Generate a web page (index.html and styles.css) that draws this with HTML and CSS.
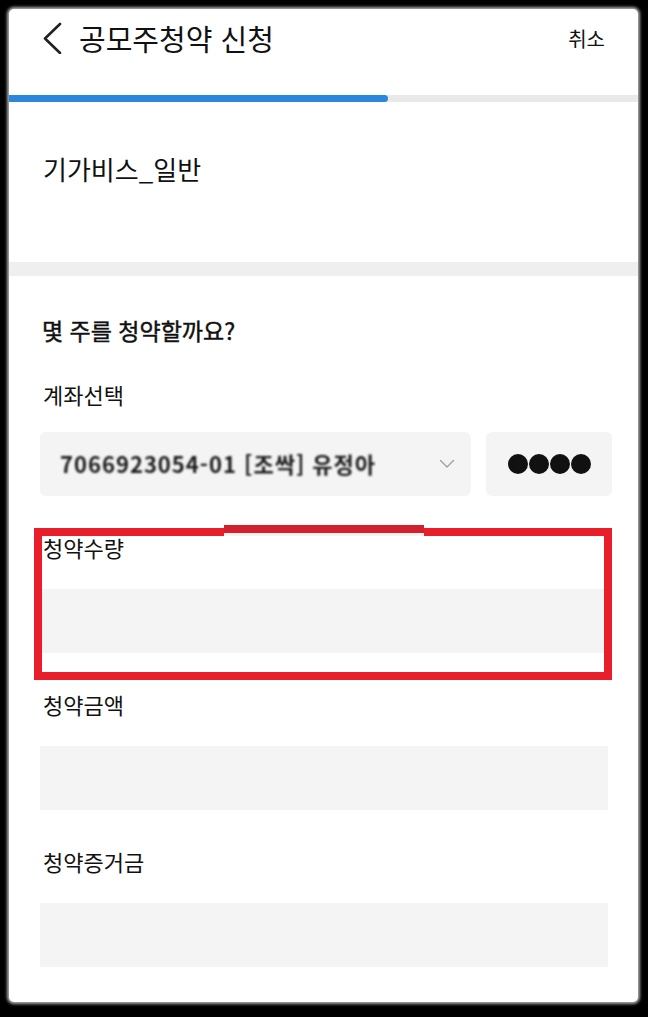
FILE: index.html
```html
<!DOCTYPE html>
<html lang="ko">
<head>
<meta charset="utf-8">
<title>공모주청약 신청</title>
<link rel="stylesheet" href="styles.css">
</head>
<body>
<div class="card">
  <header class="topbar">
    <svg class="back" width="20" height="32" viewBox="0 0 20 32" aria-hidden="true">
      <polyline points="18,2 3,16.5 18,31" fill="none" stroke="#222" stroke-width="2.6" stroke-linecap="round" stroke-linejoin="round"/>
    </svg>
    <h1 class="title">공모주청약 신청</h1>
    <span class="cancel">취소</span>
  </header>
  <div class="progress"><div class="progress-fill" style="width:379px"></div></div>

  <section class="product">
    <p class="product-name">기가비스_일반</p>
  </section>
  <div class="band"></div>

  <section class="form">
    <h2 class="question">몇 주를 청약할까요?</h2>
    <p class="label label-account">계좌선택</p>
    <div class="account-row">
      <div class="select">
        <span class="account">7066923054-01 [조싹] 유정아</span>
        <svg class="caret" width="16" height="10" viewBox="0 0 16 10" aria-hidden="true">
          <polyline points="1.5,1.5 8,8 14.5,1.5" fill="none" stroke="#a0a0a0" stroke-width="1.4" stroke-linecap="round" stroke-linejoin="round"/>
        </svg>
      </div>
      <div class="pw">
        <span class="dot"></span><span class="dot"></span><span class="dot"></span><span class="dot"></span>
      </div>
    </div>

    <div class="field field-highlight">
      <p class="label">청약수량</p>
      <div class="input"></div>
      <div class="mark"><div class="mark-notch"></div></div>
    </div>
    <div class="field">
      <p class="label">청약금액</p>
      <div class="input"></div>
    </div>
    <div class="field">
      <p class="label">청약증거금</p>
      <div class="input"></div>
    </div>
  </section>
</div>
</body>
</html>
```

FILE: styles.css
```css
* { box-sizing: border-box; }
html, body {
  margin: 0;
  padding: 0;
  background: #000;
}
body {
  width: 648px;
  height: 1017px;
  overflow: hidden;
  font-family: "Noto Sans CJK KR", "Noto Sans", sans-serif;
  color: #111;
}
.card {
  margin: 9px 0 0 9px;
  width: 629px;
  height: 993px;
  background: #fff;
  border-radius: 5px;
  box-shadow: 0 0 3px 2px rgba(200, 200, 200, 0.85);
  overflow: hidden;
}
.topbar {
  height: 57px;
  display: flex;
  align-items: center;
  padding: 0 33px 0 33px;
}
.back {
  display: block;
  flex: none;
  margin-top: 1px;
}
.title {
  margin: 0 0 0 17px;
  font-size: 29px;
  font-weight: 400;
  line-height: 40px;
  flex: 1;
}
.cancel {
  font-size: 20px;
  line-height: 30px;
  margin-top: 2px;
}
.progress {
  margin-top: 29px;
  height: 7px;
  background: #e9e9e9;
}
.progress-fill {
  height: 7px;
  background: #2b87dc;
  border-radius: 0 4px 4px 0;
}
.product {
  height: 160px;
  padding: 50px 31px 0 34px;
}
.product-name {
  margin: 0;
  font-size: 26px;
  line-height: 34px;
}
.band {
  height: 14px;
  background: #efefef;
}
.form {
  padding: 38px 30px 0 31px;
}
.question {
  margin: 0 0 0 2px;
  font-size: 23px;
  font-weight: 400;
  -webkit-text-stroke: 0.45px #111;
  line-height: 32px;
}
.label {
  margin: 0 0 0 3px;
  font-size: 22px;
  line-height: 30px;
}
.label-account {
  margin-top: 33px;
}
.account-row {
  margin: 23px -4px 0 0;
  display: flex;
  gap: 15px;
  height: 64px;
}
.select {
  flex: 1;
  background: #f4f4f4;
  border-radius: 6px;
  display: flex;
  align-items: center;
  padding: 0 16px 0 20px;
}
.account {
  flex: 1;
  font-size: 22px;
  font-weight: 700;
  color: #1a1a1a;
  filter: blur(0.8px);
  letter-spacing: 1px;
  white-space: nowrap;
  margin-top: -2px;
}
.caret {
  display: block;
}
.pw {
  width: 126px;
  background: #f4f4f4;
  border-radius: 6px;
  display: flex;
  align-items: center;
  justify-content: center;
  gap: 1px;
}
.dot {
  width: 20px;
  height: 20px;
  border-radius: 50%;
  background: #111;
}
.field {
  margin-top: 36px;
  position: relative;
}
.field .input {
  margin-top: 27px;
  height: 64px;
  background: #f4f4f4;
}
.mark {
  position: absolute;
  top: -4px;
  left: -6px;
  right: -4px;
  bottom: -27px;
  border: 8px solid #e81f2b;
  pointer-events: none;
}
.mark-notch {
  position: absolute;
  top: -11px;
  left: 182px;
  width: 200px;
  height: 11px;
  background: #d3202e;
  border-bottom: 3px solid #fdf0f0;
}
```
